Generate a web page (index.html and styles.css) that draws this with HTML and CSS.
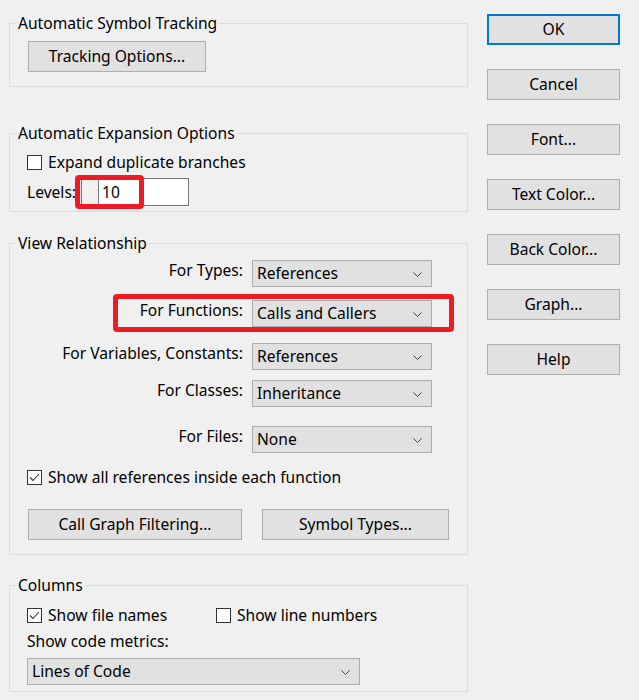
FILE: index.html
```html
<!DOCTYPE html>
<html lang="en">
<head>
    <meta charset="UTF-8">
    <title>Browser Options</title>
    <link rel="stylesheet" href="styles.css">
</head>
<body>
    <div class="dialog">
        <div class="left-col">
            <!-- Automatic Symbol Tracking -->
            <fieldset class="group tracking">
                <legend>Automatic Symbol Tracking</legend>
                <div class="group-body">
                    <button class="btn btn-tracking">Tracking Options...</button>
                </div>
            </fieldset>

            <!-- Automatic Expansion Options -->
            <fieldset class="group expansion">
                <legend>Automatic Expansion Options</legend>
                <div class="group-body">
                    <label class="check-row">
                        <span class="checkbox"></span>
                        <span>Expand duplicate branches</span>
                    </label>
                    <div class="levels-row">
                        <span class="levels-label">Levels:</span>
                        <div class="spin-box">
                            <span class="spin-left"></span>
                            <span class="spin-value">10</span>
                        </div>
                        <span class="highlight highlight-levels"></span>
                    </div>
                </div>
            </fieldset>

            <!-- View Relationship -->
            <fieldset class="group relationship">
                <legend>View Relationship</legend>
                <div class="group-body">
                    <div class="rel-row row-types">
                        <span class="rel-label">For Types:</span>
                        <div class="combo"><span>References</span><svg class="chevron" width="9" height="5" viewBox="0 0 9 5"><polyline points="0.5,0.5 4.5,4.5 8.5,0.5" fill="none" stroke="#444" stroke-width="1"/></svg></div>
                    </div>
                    <div class="rel-row row-functions">
                        <span class="rel-label">For Functions:</span>
                        <div class="combo"><span>Calls and Callers</span><svg class="chevron" width="9" height="5" viewBox="0 0 9 5"><polyline points="0.5,0.5 4.5,4.5 8.5,0.5" fill="none" stroke="#444" stroke-width="1"/></svg></div>
                        <span class="highlight highlight-functions"></span>
                    </div>
                    <div class="rel-row row-variables">
                        <span class="rel-label">For Variables, Constants:</span>
                        <div class="combo"><span>References</span><svg class="chevron" width="9" height="5" viewBox="0 0 9 5"><polyline points="0.5,0.5 4.5,4.5 8.5,0.5" fill="none" stroke="#444" stroke-width="1"/></svg></div>
                    </div>
                    <div class="rel-row row-classes">
                        <span class="rel-label">For Classes:</span>
                        <div class="combo"><span>Inheritance</span><svg class="chevron" width="9" height="5" viewBox="0 0 9 5"><polyline points="0.5,0.5 4.5,4.5 8.5,0.5" fill="none" stroke="#444" stroke-width="1"/></svg></div>
                    </div>
                    <div class="rel-row row-files">
                        <span class="rel-label">For Files:</span>
                        <div class="combo"><span>None</span><svg class="chevron" width="9" height="5" viewBox="0 0 9 5"><polyline points="0.5,0.5 4.5,4.5 8.5,0.5" fill="none" stroke="#444" stroke-width="1"/></svg></div>
                    </div>

                    <label class="check-row show-refs">
                        <span class="checkbox checked"><svg width="13" height="13" viewBox="0 0 13 13"><polyline points="2,6.5 5,9.5 11,3" fill="none" stroke="#333" stroke-width="1.1"/></svg></span>
                        <span>Show all references inside each function</span>
                    </label>

                    <div class="rel-buttons">
                        <button class="btn btn-callgraph">Call Graph Filtering...</button>
                        <button class="btn btn-symbols">Symbol Types...</button>
                    </div>
                </div>
            </fieldset>

            <!-- Columns -->
            <fieldset class="group columns">
                <legend>Columns</legend>
                <div class="group-body">
                    <div class="col-checks">
                        <label class="check-row file-names">
                            <span class="checkbox checked"><svg width="13" height="13" viewBox="0 0 13 13"><polyline points="2,6.5 5,9.5 11,3" fill="none" stroke="#333" stroke-width="1.1"/></svg></span>
                            <span>Show file names</span>
                        </label>
                        <label class="check-row">
                            <span class="checkbox"></span>
                            <span>Show line numbers</span>
                        </label>
                    </div>
                    <div class="metrics-label">Show code metrics:</div>
                    <div class="combo combo-metrics"><span>Lines of Code</span><svg class="chevron" width="9" height="5" viewBox="0 0 9 5"><polyline points="0.5,0.5 4.5,4.5 8.5,0.5" fill="none" stroke="#444" stroke-width="1"/></svg></div>
                </div>
            </fieldset>
        </div>

        <!-- Dialog buttons -->
        <div class="right-col">
            <button class="btn btn-side btn-default">OK</button>
            <button class="btn btn-side">Cancel</button>
            <button class="btn btn-side">Font...</button>
            <button class="btn btn-side">Text Color...</button>
            <button class="btn btn-side">Back Color...</button>
            <button class="btn btn-side">Graph...</button>
            <button class="btn btn-side">Help</button>
        </div>
    </div>
</body>
</html>
```

FILE: styles.css
```css
* {
    margin: 0;
    padding: 0;
    box-sizing: border-box;
}

:root {
    --face: #f0f0f0;
    --line: #dcdcdc;
    --btn-face: #e1e1e1;
    --btn-line: #adadad;
    --mark: #ed1c24;
}

body {
    background-color: var(--face);
    font-family: 'Noto Sans', 'Liberation Sans', sans-serif;
    font-size: 15.6px;
    line-height: 20px;
    color: #000;
}

.dialog {
    display: flex;
    gap: 19px;
    padding-left: 9px;
}

.left-col {
    width: 459px;
}

/* Group boxes */
.group {
    border: 1px solid var(--line);
    min-width: 0;
}

.group legend {
    margin-left: 6px;
    padding: 0 2px;
    line-height: 20px;
}

.group-body {
    padding-left: 17px;
}

.tracking {
    margin-top: 13px;
}

.tracking .group-body {
    padding: 8px 0 14px 18px;
}

.expansion {
    margin-top: 36px;
}

.expansion .group-body {
    padding-top: 9px;
    padding-bottom: 5px;
}

.relationship {
    margin-top: 21px;
}

.relationship .group-body {
    padding-top: 7px;
    padding-bottom: 14px;
}

.columns {
    margin-top: 20px;
}

.columns .group-body {
    padding-top: 10px;
    padding-bottom: 6px;
}

/* Buttons */
.btn {
    font-family: inherit;
    font-size: 15.6px;
    color: #000;
    background-color: var(--btn-face);
    border: 1px solid var(--btn-line);
    height: 31px;
    padding-bottom: 2px;
    cursor: pointer;
}

.btn-tracking {
    width: 178px;
}

/* Checkboxes */
.check-row {
    display: flex;
    align-items: center;
    gap: 6px;
    height: 20px;
}

.checkbox {
    width: 15px;
    height: 15px;
    border: 1px solid #333;
    background-color: #fff;
    display: flex;
    align-items: center;
    justify-content: center;
}

/* Levels spin box */
.levels-row {
    position: relative;
    display: flex;
    align-items: center;
    margin-top: 6px;
    height: 28px;
}

.levels-label {
    width: 54px;
}

.spin-box {
    display: flex;
    width: 108px;
    height: 28px;
    border: 1px solid #7a7a7a;
    background-color: #fff;
}

.spin-left {
    width: 17px;
    background-color: var(--face);
    border-right: 1px solid #7a7a7a;
}

.spin-value {
    padding-left: 3px;
    line-height: 26px;
}

/* Red marker boxes */
.highlight {
    position: absolute;
    border: 5px solid var(--mark);
    border-radius: 4px;
}

.highlight-levels {
    left: 48px;
    top: -3px;
    width: 69px;
    height: 34px;
}

.highlight-functions {
    left: 103px;
    top: -6px;
    width: 341px;
    height: 38px;
}

/* View relationship rows */
.rel-row {
    position: relative;
    display: grid;
    grid-template-columns: 233px 180px;
    column-gap: 9px;
    margin-left: -17px;
}

.rel-label {
    text-align: right;
}

.row-functions {
    margin-top: 13px;
}

.row-variables {
    margin-top: 16px;
}

.row-classes {
    margin-top: 10px;
}

.row-files {
    margin-top: 19px;
}

.combo {
    position: relative;
    height: 27px;
    background-color: var(--btn-face);
    border: 1px solid var(--btn-line);
    padding-left: 4px;
    line-height: 25px;
}

.chevron {
    position: absolute;
    right: 9px;
    top: 11px;
}

.show-refs {
    margin-top: 14px;
}

.rel-buttons {
    display: flex;
    gap: 20px;
    margin-top: 22px;
    margin-left: 1px;
}

.btn-callgraph {
    width: 214px;
}

.btn-symbols {
    width: 187px;
}

/* Columns group */
.col-checks {
    display: flex;
}

.file-names {
    width: 189px;
}

.metrics-label {
    margin-top: 6px;
}

.combo-metrics {
    width: 333px;
    margin-top: 7px;
}

/* Right side buttons */
.right-col {
    display: flex;
    flex-direction: column;
    gap: 24px;
    padding-top: 14px;
}

.btn-side {
    width: 133px;
}

.btn-default {
    border: 2px solid #0078d7;
}
```
